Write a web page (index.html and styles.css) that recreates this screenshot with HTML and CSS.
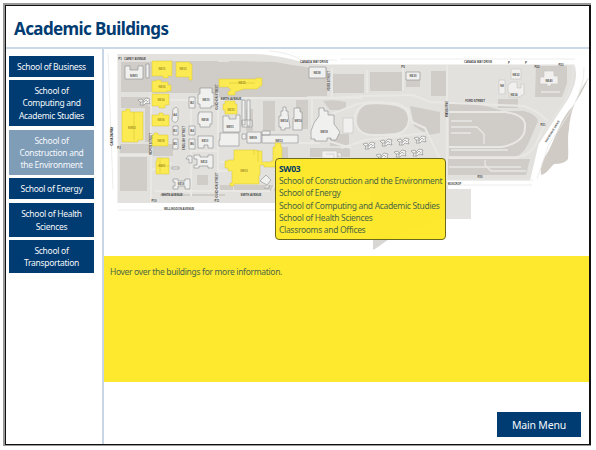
FILE: index.html
```html
<!DOCTYPE html>
<html lang="en">
<head>
<meta charset="utf-8">
<title>Academic Buildings</title>
<link rel="stylesheet" href="styles.css">
</head>
<body>
<div class="frame">
  <header class="header"><h1>Academic Buildings</h1></header>
  <div class="body">
    <nav class="sidebar">
      <button class="school one">School of Business</button>
      <button class="school three">School of<br>Computing and<br>Academic Studies</button>
      <button class="school three active">School of<br>Construction and<br>the Environment</button>
      <button class="school energy">School of Energy</button>
      <button class="school health">School of Health<br>Sciences</button>
      <button class="school two">School of<br>Transportation</button>
    </nav>
    <main class="content">
      <div class="map">
        <svg class="campus" viewBox="104 48 485 208" role="img" aria-label="Campus map">
          <!-- ground -->
          <path fill="#e2e1de" d="M117 53H250C280 53 300 62 325 63H576Q579 82 568 103L541 145L532 180H448V192H117Z"/>
          <path fill="#e2e1de" d="M117 190H276V202H117Z"/>
          <path fill="#e3e2df" d="M440 188H471V218H440Z"/>
          <path fill="#d9d7d3" d="M373 185H440V218C431 223 418 228 405 231C390 235 382 244 373 249Z"/>
          <path fill="#d0cbc5" d="M589 76C576 94 570 112 569 128C567 137 569 150 568 158Q565 163 554 163C550 167 546 173 541 174Q539 164 549 149C556 135 561 117 572 106Q582 93 589 76Z"/>
          <!-- parking lots and fields -->
          <g fill="#d0cdc8">
            <path d="M121 61H153V91H121ZM153 60H218V92H153ZM218 61H265L307 66V96H218Z"/>
            <path d="M121 96H148V107H121ZM145 105H152V141H145ZM120 143H151V152H120ZM120 156H147V190H120ZM153 143H173V155H153Z"/>
            <path d="M263 100H275V130H263ZM296 99H308V128H296ZM246 108H253V130H246ZM197 174H208V184H197ZM220 184H233V191H220ZM160 193H225V195H160Z"/>
            <path d="M229 60L275 61L309 67H327V95H229Z"/>
            <path d="M333 73H364V92H333ZM370 71H402V90H370ZM406 72H420V86H406ZM431 70H446V95H431Z"/>
            <path d="M366 104Q378 102 396 105Q409 109 408 119Q408 131 393 132L368 134Q357 132 357 119Q358 107 366 104Z"/>
            <path d="M410 105L440 111V132L428 134L414 125ZM449 103H470Q487 104 502 110H524Q536 113 538 120L528 143Q523 153 517 155H449Z"/>
            <path d="M536 65H567V82L562 96H535ZM448 158H530L526 174H448ZM323 100Q335 98 346 101V109H330ZM279 146H288V160H279ZM330 133H349V145H330Z"/>
            <path d="M498 98H518V107H498ZM234 184H276V190H234ZM310 147H350V156H310Z"/>
          </g>
          <!-- paths -->
          <g fill="none" stroke="#e9e8e5" stroke-width="2" stroke-linejoin="round">
            <path d="M151 92V202M218 92V202M118 154H151M153 99H226M191 104V195M228 97H362M312 98V144M332 67V98M367 69V92M403 63V90M447 64V180"/>
            <path d="M330 97L365 95L413 94L430 101L524 105Q538 110 548 120M332 113L357 103Q382 97 408 108L412 121L425 127L440 158"/>
            <path d="M341 147L366 139L426 132M449 111H505Q526 114 525 125Q526 141 502 146H449M449 157H515Q529 155 535 145L546 121"/>
            <path d="M220 161H233M217 170H247M192 150H218M272 142H320M309 134L351 147M272 190L280 172M155 190H270M152 169L172 162"/>
            <path stroke-width="1.3" d="M451 120H472M451 126H477L484 133V143M451 132H471M451 149H508M449 166H521M485 159V164L491 170H526M541 91H560"/>
            <rect x="355" y="102" width="54" height="32" rx="16"/>
          </g>
          <!-- surrounding roads -->
          <g fill="none" stroke="#fff">
            <path stroke-width="5" d="M115 50V206M115 205H276M447 182H536M267 50C285 51 294 60 326 61H576Q583 76 571 98L541 144L532 182"/>
            <path stroke="#e9e9e7" stroke-width=".8" d="M108 52L113 188M118 209H276M340 58H575M584 66Q585 83 572 108L548 145L537 178M573 64Q575 83 562 105L538 140M447 179H533M448 184H532M269 50Q288 51 301 59H337"/>
          </g>
          <!-- buildings -->
          <g fill="#f0f0ee" stroke="#8c8c8d" stroke-width=".6" stroke-linejoin="round">
            <path d="M125 65H130V69H138V65H143V78H125Z"/>
            <path d="M146 63H149V77H146ZM189 96H195V107H189ZM173 108Q178 104 178 110V119Q175 124 172 119ZM173 125H178V134H173ZM173 138H178V148H173ZM189 125H195V134H189ZM189 138H195V148H189Z"/>
            <path d="M200 87H212V92H214V105H211V107H200V103H198V93H200ZM199 111H212V123H210V126H200V123H198V113H199ZM198 135H213V147H208V144H204V147H198ZM194 154H200V156H208V154H213V167H208V165H199V167H194V164H197V158H194Z"/>
            <path d="M172 166H179V168H172ZM188 155H192V162H189V158H186ZM173 178H178V180H185V178H190V188H185V185H178V188H173V185H175V181H173Z"/>
            <path d="M223 115H229V118H236V114H240V131H223ZM220 132H239V145H219V139H220ZM242 99H245V124H242ZM247 99H250V125H247ZM242 119H252V126H242Z"/>
            <path d="M247 131H261V142H247ZM262 134H298V142H262ZM262 130H270V134H262ZM242 133H246V138H242Z"/>
            <path d="M281 110H283V106H286V110H288V113L290 127H285V129H281V126H279V115H281ZM294 107H300V111H302V129H293V117H294Z"/>
            <path d="M319 107H324V110H328V114H334V123L340 131L336 139H331V137H327V140H315V138H311V130L314 122L319 115Z"/>
            <path d="M309 66H326V77H309ZM406 71H420V79H406ZM260 180L266 174L271 179L267 184ZM264 187H269V184"/>
          </g>
          <g fill="#f1f0ee" stroke="#c4c3c0" stroke-width=".6">
            <path d="M511 68H521V78H511ZM499 79H505V93H499ZM508 84L512 81H517V87H521V83H524V93L519 96H509V91H508ZM544 70H554V75H558V83H551V85H547V83H540V76H544Z"/>
            <path d="M322 150H337V158H322ZM326 153H334V158M337 152H341V157M343 117H353V132H343Z"/>
          </g>
          <defs>
            <g id="housing" stroke="#858585" stroke-width=".6" fill="#f4f4f2"><path d="M0 3L4 2L5 4L8 1L12 2L11 4L12 7L8 6L6 8L2 8L3 6Z"/><path fill="none" d="M2 5L6 5L8 3L10 5M5 4V8"/></g>
          </defs>
          <g>
            <use href="#housing" x="363" y="140"/><use href="#housing" x="380" y="137"/><use href="#housing" x="397" y="136"/><use href="#housing" x="414" y="134"/>
            <use href="#housing" x="376" y="151"/><use href="#housing" x="394" y="148"/><use href="#housing" x="411" y="147"/><use href="#housing" x="138" y="96"/>
          </g>
          <!-- highlighted buildings -->
          <g fill="#fcea52" stroke="#d8c536" stroke-width=".5">
            <path d="M152 60H172V75H168V77H163V75H152ZM176 61H190V63H192V79H189V76H176Z"/>
            <path d="M152 80H156V79H161V81H168V84H171V90H167V91H152ZM152 93H169V104H165V107H159V105H152Z"/>
            <path d="M152 114H159V112H163V114H169V125H152ZM152 134H154V132H158V134H168V145H152ZM157 157H169V173H156V160H157Z"/>
            <path d="M122 110H126V108H130V111H143V139H138V141H122Z"/>
            <path d="M219 78H256V77H262V84L257 88H244L235 91V94H228V91L231 89L228 86H219ZM225 100H235V103H237V113H225V109H223V103H225Z"/>
            <path d="M234 149H257V150H262V161H271V160H273V146H275V142H281V146H282V158H282V166H264V164H260V174H259V183H234V185H230V182H232V170H228V167H225V160H228V159H234Z"/>
          </g>
          <path fill="none" stroke="#d0bd31" stroke-width=".5" d="M134 111V139M160 158V172M157 165H169M258 149V161M254 149V154M229 82H255"/>
          <!-- building and street labels -->
          <g class="code gold">
            <text x="162" y="69">NE01</text><text x="183" y="69">NE03</text><text x="162" y="87">NE02</text><text x="161" y="100">NE04</text><text x="161" y="120">NE06</text><text x="161" y="141">NE08</text><text x="162" y="166">SE01</text><text x="132" y="128">NW03</text><text x="242" y="83">NE25</text><text x="231" y="110">NE20</text><text x="244" y="171">SW03</text>
          </g>
          <g class="code">
            <text x="134" y="76">NW01</text>
            <text x="206" y="100">NE10</text><text x="205" y="120">NE08</text><text x="205" y="141">SE10</text><text x="204" y="162">SE12</text><text x="181" y="184">SE19</text><text x="175" y="115">A4</text><text x="192" y="103">B2</text><text x="175" y="131">B3</text><text x="192" y="131">B4</text><text x="175" y="144">B5</text><text x="192" y="144">B6</text>
            <text x="230" y="127">SW01</text><text x="253" y="138">SW09</text><text x="279" y="141">SW12</text><text x="284" y="121">SW14</text><text x="298" y="121">SW16</text><text x="324" y="132">SW18</text><text x="317" y="73">NE28</text><text x="413" y="76">NE30</text><text x="516" y="75">NE32</text><text x="514" y="95">NE34</text><text x="549" y="81">NE40</text><text x="502" y="86">N8</text>
          </g>
          <g class="street">
            <text x="135" y="59">CAREY AVENUE</text><text x="314" y="62">CANADA WAY DRIVE</text><text x="478" y="62">CANADA WAY DRIVE</text><text x="231" y="99">SMITH AVENUE</text><text x="475" y="101">FORD STREET</text><text x="172" y="195">WHITE AVENUE</text><text x="251" y="195">SMITH AVENUE</text><text x="179" y="209">WILLINGDON AVENUE</text><text x="454.5" y="184" font-size="2.6">MOSCROP</text><text x="480" y="177">P20</text><text x="154" y="201">P10</text><text x="217" y="201">P11</text><text x="120" y="59">P1</text><text x="119" y="148">P2</text><text x="537" y="67">P22</text><text x="526" y="63">P</text><text x="509" y="63">P</text><text x="561" y="65">P23</text><text x="543" y="125">P21</text><text x="403" y="67">P5</text>
            <text transform="translate(113 135) rotate(-90)">CANADA WAY</text><text transform="translate(152 143) rotate(-90)">ROPER STREET</text><text transform="translate(185 137) rotate(-90)">ENGLISH STREET</text><text transform="translate(218 184) rotate(-90)">GUICHON STREET</text><text transform="translate(218 96) rotate(-90)">GUICHON STREET</text><text transform="translate(330 80) rotate(-90)">FORD STREET</text><text transform="translate(448 108) rotate(-90)">WAYBURNE</text><text transform="translate(553 131) rotate(-58)">WAYBURNE DRIVE</text>
          </g>
        </svg>
        <div class="tooltip">
          <strong>SW03</strong>
          <span>School of Construction and the Environment</span>
          <span>School of Energy</span>
          <span>School of Computing and Academic Studies</span>
          <span>School of Health Sciences</span>
          <span>Classrooms and Offices</span>
        </div>
      </div>
      <section class="info">Hover over the buildings for more information.</section>
      <footer class="footer"><button class="menu">Main Menu</button></footer>
    </main>
  </div>
</div>
</body>
</html>
```
FILE: styles.css
```css
* { box-sizing: border-box; }
body { margin: 0; padding: 5px; width: 596px; height: 450px; overflow: hidden; background: #fff; font-family: "Noto Sans", "Open Sans", sans-serif; }
.frame { display: flex; flex-direction: column; width: 586px; height: 440px; border: 1px solid #111; border-right-width: 2px; box-shadow: -1px -1px 0 1px #999, -1px 0 0 1px #999; }
.header { flex: 0 0 43px; border-bottom: 2px solid #cbd8e5; padding: 9px 0 0 8px; }
h1 { margin: 0; color: #003b71; font-size: 17px; line-height: 27px; font-weight: 700; letter-spacing: -.6px; white-space: nowrap; }
.body { display: flex; flex: 1; min-height: 0; }
.sidebar { display: flex; flex-direction: column; flex: 0 0 98px; padding: 7px 0 0 3px; border-right: 2px solid #c9d6e5; }
button { border: 0; padding: 0; background: #003b71; color: #f5f8fb; font-family: inherit; }
.school { width: 85px; height: 33px; margin-bottom: 4px; padding-top: 1px; font-size: 8.5px; line-height: 12.3px; letter-spacing: -.3px; white-space: nowrap; }
.school.one { height: 21px; margin-bottom: 3px; }
.school.three { height: 46px; }
.school.active { height: 45px; margin-bottom: 3px; background: #809db8; }
.school.energy { height: 21px; }
.school.health { height: 34px; margin-bottom: 3px; }
.content { display: flex; flex: 1; flex-direction: column; }
.map { position: relative; height: 207px; }
.campus { display: block; width: 485px; height: 208px; }
.code, .street { fill: #555; font: 700 2.8px "Liberation Sans", sans-serif; text-anchor: middle; }
.gold { fill: #a39222; }
.street { fill: #444; }
.tooltip { position: absolute; left: 171px; top: 109px; display: flex; flex-direction: column; width: 171px; height: 82px; padding: 4px 3px; border: 1px solid #6d691c; border-radius: 4px; background: rgba(255, 232, 38, .96); color: #4b6840; font-size: 8.5px; line-height: 12.2px; letter-spacing: -.32px; white-space: nowrap; }
.tooltip strong { color: #003b61; }
.info { height: 126px; padding: 9px 6px; background: #ffe92e; color: #4b6840; font-size: 8.5px; line-height: 13px; letter-spacing: -.33px; }
.footer { display: flex; justify-content: flex-end; padding: 30px 8px 0 0; }
.menu { width: 84px; height: 25px; font-size: 10.5px; letter-spacing: -.2px; }
```
